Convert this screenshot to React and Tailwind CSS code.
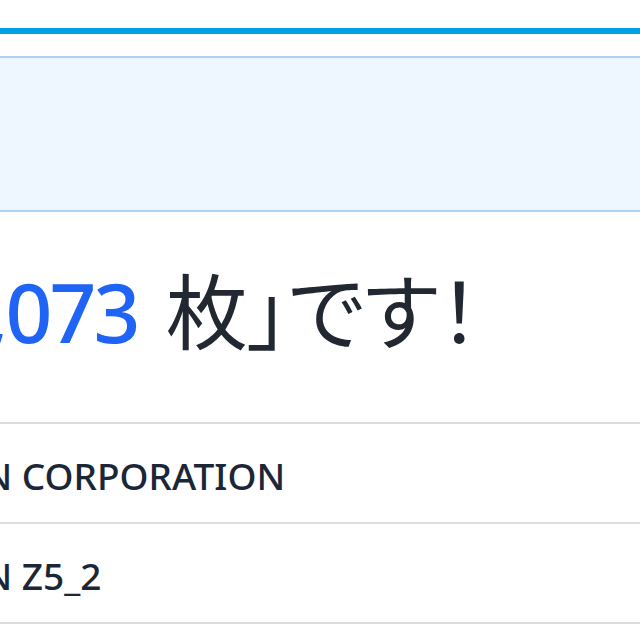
export default function App() {
  const rows = ['NIKON CORPORATION', 'NIKON Z5_2']

  return (
    <div className="w-[640px] h-[640px] overflow-hidden bg-white font-['Noto_Sans','Noto_Sans_CJK_JP',sans-serif]">
      {/* top accent bar */}
      <div className="pt-[28px]">
        <div className="h-[6px] bg-[#00a0e9]" />
      </div>

      {/* info panel */}
      <div className="mt-[22px] -mx-[20px] h-[156px] border-y-2 border-[#add0f4] bg-[#eef6ff]" />

      {/* headline */}
      <div className="mt-[58px] -ml-[284px] whitespace-nowrap text-[82px] leading-none text-[#222831] [font-feature-settings:'palt']">
        「合計 <span className="mr-[7px] font-medium tracking-[-3px] text-[#1f64f4]">1,073</span> 枚」です！
      </div>

      {/* detail rows */}
      <div className="mt-[70px]">
        {rows.map((r) => (
          <div key={r} className="h-[100px] border-t-2 border-[#dddde0] flex items-center pt-[6px]">
            <span className="-ml-[110px] whitespace-nowrap text-[37px] font-medium text-[#1b2636]">{r}</span>
          </div>
        ))}
        <div className="border-t-2 border-[#dddde0]" />
      </div>
    </div>
  )
}
